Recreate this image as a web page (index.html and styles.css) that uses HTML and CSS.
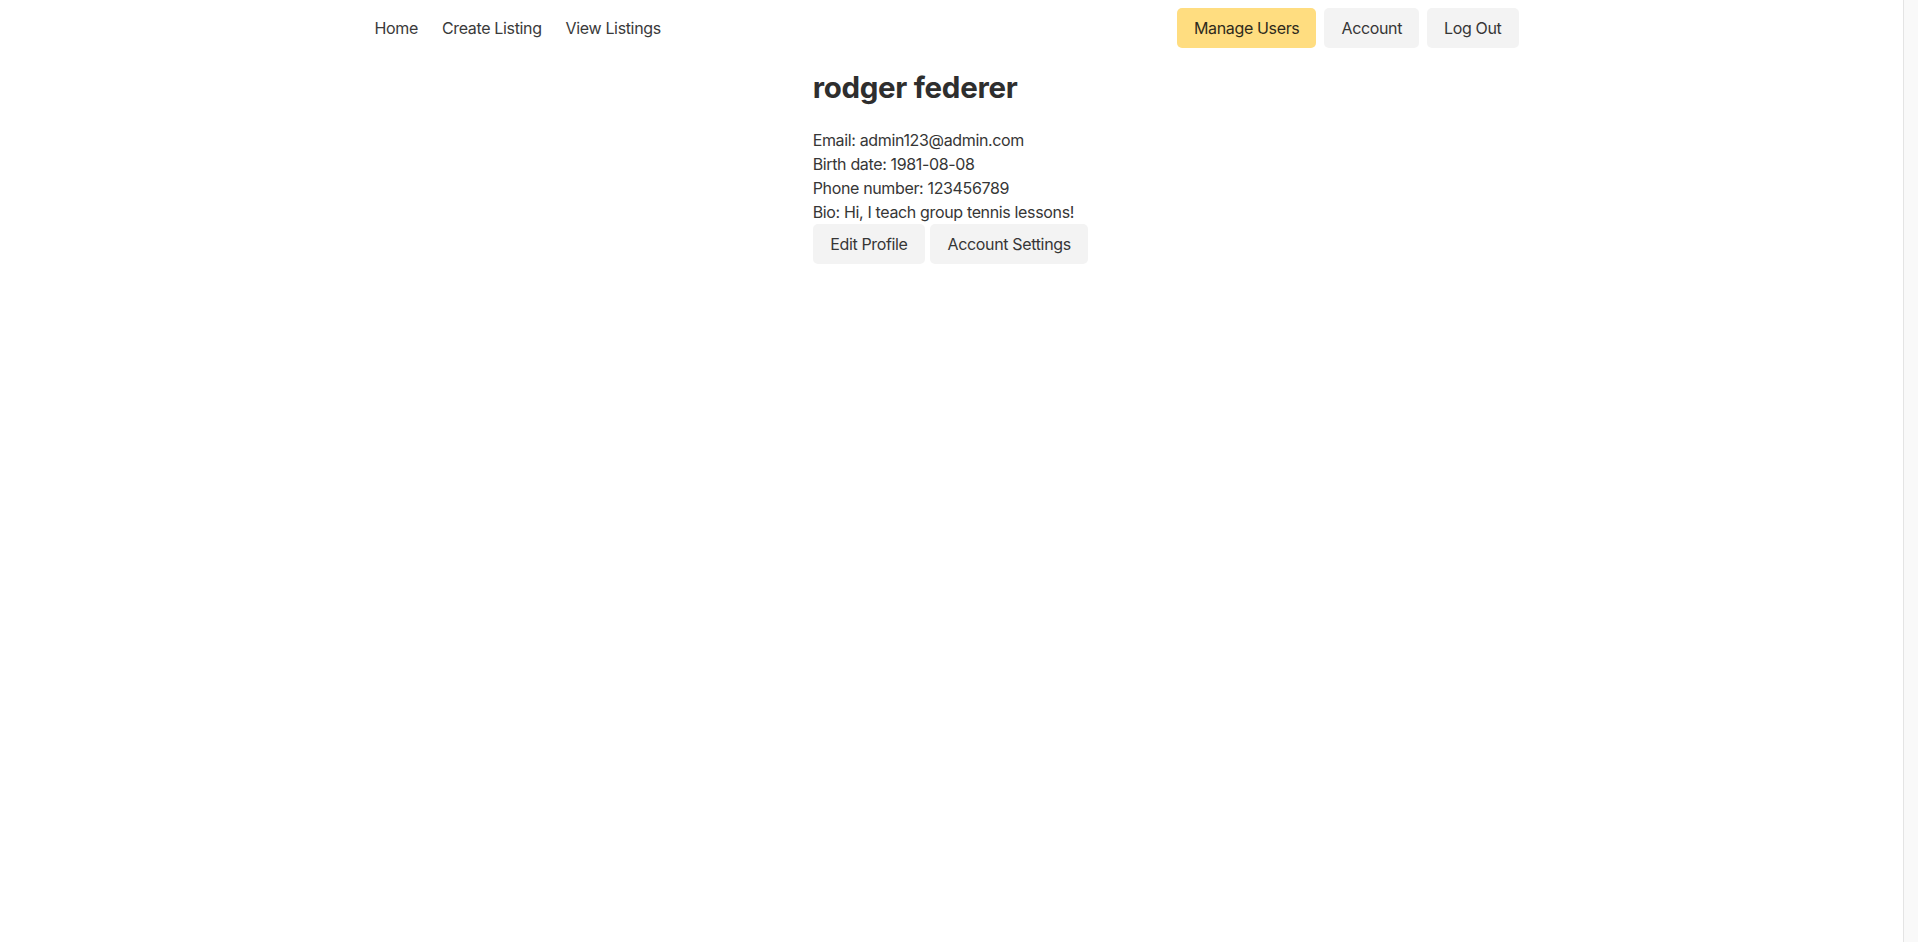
FILE: index.html
```html
<!DOCTYPE html>
<html lang="en">
<head>
<meta charset="utf-8">
<title>Profile</title>
<link rel="stylesheet" href="styles.css">
</head>
<body>
<div class="window">
  <div class="page">
    <nav class="navbar">
      <div class="nav-inner">
        <div class="nav-links">
          <a class="nav-link" href="#">Home</a>
          <a class="nav-link" href="#">Create Listing</a>
          <a class="nav-link" href="#">View Listings</a>
        </div>
        <div class="nav-buttons">
          <a class="btn btn-warning" href="#">Manage Users</a>
          <a class="btn" href="#">Account</a>
          <a class="btn" href="#">Log Out</a>
        </div>
      </div>
    </nav>
    <main class="content">
      <section class="profile">
        <h1 class="title">rodger federer</h1>
        <p class="info">Email: admin123@admin.com</p>
        <p class="info">Birth date: 1981-08-08</p>
        <p class="info">Phone number: 123456789</p>
        <p class="info">Bio: Hi, I teach group tennis lessons!</p>
        <div class="actions">
          <a class="btn" href="#">Edit Profile</a>
          <a class="btn" href="#">Account Settings</a>
        </div>
      </section>
    </main>
  </div>
  <div class="scroll-track"></div>
</div>
</body>
</html>
```

FILE: styles.css
```css
* { box-sizing: border-box; }

html, body {
  margin: 0;
  padding: 0;
  height: 100%;
  background: #ffffff;
}

body {
  font-family: Inter, "Noto Sans", "Liberation Sans", sans-serif;
  font-size: 16px;
  line-height: 24px;
  letter-spacing: -0.35px;
  color: #363636;
}

.window {
  display: flex;
  height: 100vh;
  overflow: hidden;
}

.page {
  flex: 1;
  min-width: 0;
}

.scroll-track {
  width: 15px;
  flex: 0 0 15px;
  background: #f9f9f9;
  border-left: 1px solid #e4e4e4;
}

.navbar {
  height: 56px;
}

.nav-inner {
  width: 1152px;
  margin: 0 auto;
  height: 100%;
  display: flex;
  align-items: center;
  justify-content: space-between;
}

.nav-links {
  display: flex;
  gap: 24px;
  margin-left: -1px;
}

.nav-link {
  color: #3a3a3a;
  text-decoration: none;
}

.nav-buttons {
  display: flex;
  gap: 8px;
  margin-right: 9px;
}

.btn {
  display: inline-flex;
  align-items: center;
  justify-content: center;
  height: 40px;
  padding: 0 17px;
  border-radius: 5px;
  background: #f3f3f3;
  color: #363636;
  text-decoration: none;
  font-size: 16px;
  white-space: nowrap;
}

.btn-warning {
  background: #ffdd80;
  color: #2e2a1c;
}

.content {
  display: flex;
  justify-content: center;
  padding-top: 15px;
  padding-right: 2px;
}

.profile {
  width: max-content;
}

.title {
  margin: 0 0 25px;
  font-size: 29.5px;
  line-height: 32px;
  font-weight: 700;
  color: #2e2e2e;
  letter-spacing: -0.3px;
}

.info {
  margin: 0;
}

.actions {
  display: flex;
  gap: 5px;
}

.actions .btn {
  padding: 0 17.5px;
}
```
